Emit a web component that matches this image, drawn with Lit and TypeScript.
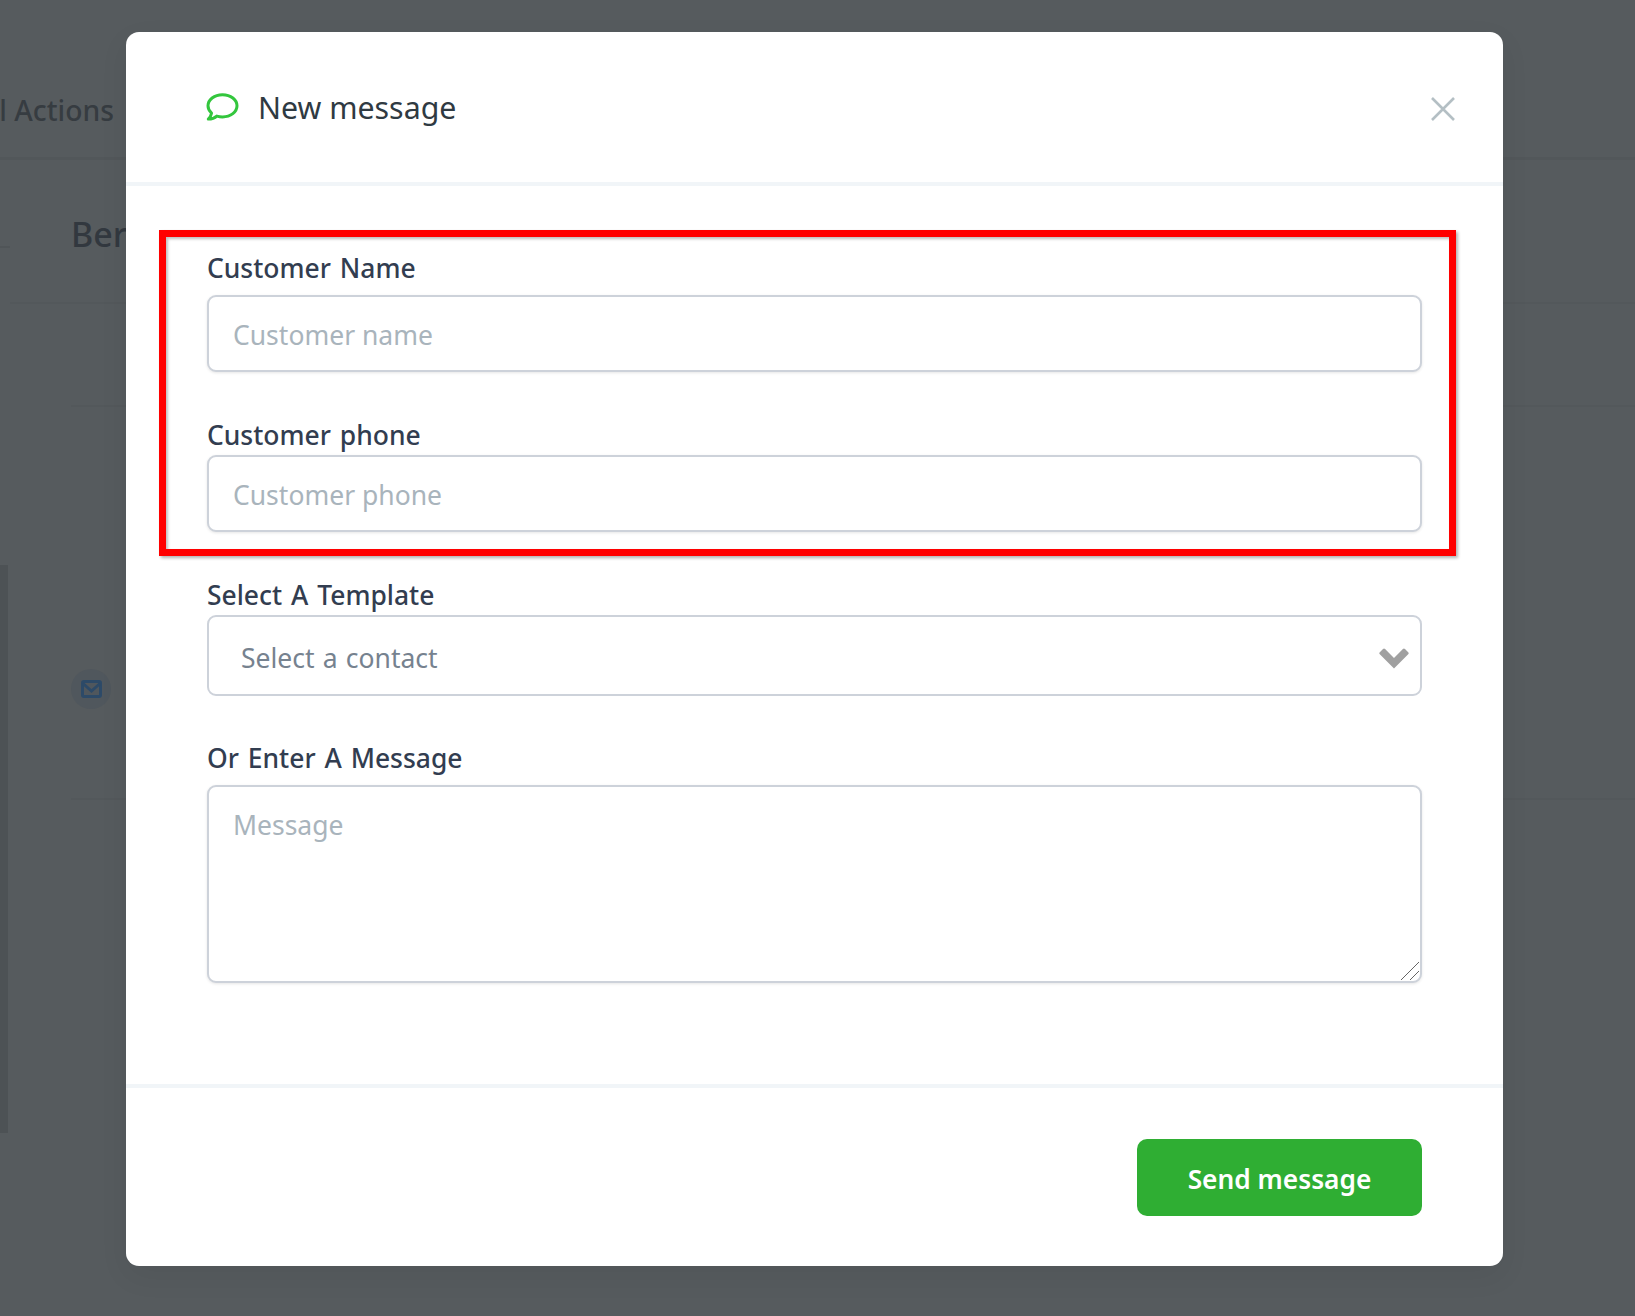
import { LitElement, html, css } from "lit";
import { customElement } from "lit/decorators.js";

@customElement("app-root")
export class AppRoot extends LitElement {
  static styles = css`
    :host { display: block; width: 1635px; height: 1316px; position: relative; overflow: hidden; background: #565b5e; font-family: "Noto Sans", "Open Sans", sans-serif; color: #2d3748; }
    * { box-sizing: border-box; }
    .page { height: 100%; display: flex; flex-direction: column; color: #32383f; }
    .nav { height: 160px; flex: none; border-bottom: 3px solid #52575a; display: flex; align-items: center; padding-top: 62px; }
    .tab { width: 114px; display: flex; justify-content: flex-end; overflow: hidden; white-space: nowrap; font-size: 28.3px; font-weight: 500; color: #363c41; }
    .top { height: 144px; flex: none; display: flex; align-items: flex-start; }
    .stub { width: 10px; height: 88px; flex: none; border-bottom: 2px solid #505558; }
    .title-row { flex: 1; height: 144px; border-bottom: 2px solid #53585b; padding: 49px 0 0 61px; font-size: 34px; font-weight: 500; line-height: 50px; }
    .rule { height: 103px; flex: none; margin-left: 71px; border-bottom: 2px solid #53585b; }
    .content { flex: 1; display: flex; min-height: 0; }
    .side { width: 8px; height: 568px; margin-top: 158px; background: #4d5255; flex: none; }
    .main { flex: 1; margin-left: 63px; height: 393px; border-bottom: 2px solid #53585b; }
    .mail { width: 40px; height: 40px; margin-top: 262px; border-radius: 50%; background: #50575d; display: flex; align-items: center; justify-content: center; }
    .mail svg { display: block; }

    .modal { position: absolute; left: 126px; top: 32px; width: 1377px; height: 1234px; background: #fff; border-radius: 13px; display: flex; flex-direction: column; box-shadow: 0 10px 30px rgba(0,0,0,.06); }
    .head { height: 154px; flex: none; border-bottom: 4px solid #f1f5f8; display: flex; align-items: center; padding: 3px 48px 0 80px; }
    .head svg.chat { margin: 0 19px 2px 0; display: block; }
    .head h2 { margin: 0 0 2px; flex: 1; font-size: 30.3px; font-weight: 400; line-height: 40px; color: #2f3a42; }
    .close { width: 24px; height: 24px; padding: 0; border: 0; background: none; display: block; }
    .body { flex: 1; padding: 68px 81px 0 81px; min-height: 0; }
    .field { display: flex; flex-direction: column; }
    .field + .field { margin-top: 49px; }
    .field.last { margin-top: 48px; }
    label { font-size: 26.45px; word-spacing: 2px; font-weight: 500; line-height: 28px; color: #323d50; margin-bottom: 6px; }
    .first label, .last label { margin-bottom: 13px; }
    input, textarea, select { font-family: inherit; font-size: 26.5px; border: 2px solid #cdd2da; border-radius: 9px; background: #fff; color: #2d3748; outline: none; width: 100%; display: block; box-shadow: 0 1px 3px rgba(0,0,0,.1); margin: 0; }
    input { height: 77px; padding: 2px 24px 0; }
    input::placeholder, textarea::placeholder { color: #a9b4bc; opacity: 1; }
    .area { position: relative; }
    textarea { height: 198px; padding: 20px 24px; line-height: 36px; resize: none; }
    .grip { position: absolute; right: 3px; bottom: 3px; display: block; pointer-events: none; }
    .sel { position: relative; }
    select { height: 81px; padding: 4px 32px 0; word-spacing: 1.300px; appearance: none; -webkit-appearance: none; color: #76828f; box-shadow: none; }
    .chev { position: absolute; right: 13px; top: 33px; display: block; pointer-events: none; }
    .foot { height: 182px; flex: none; border-top: 4px solid #f1f5f8; display: flex; justify-content: flex-end; padding: 51px 81px 0 0; }
    .send { width: 285px; height: 77px; border: 0; border-radius: 10px; background: #2fae33; color: #fff; font-family: inherit; font-size: 26.3px; font-weight: 600; padding: 2px 0 0; }

    .mark { position: absolute; left: 33px; top: 198px; width: 1297px; height: 326px; border: 7px solid #ff0000; box-shadow: 2px 2px 3px rgba(0,0,0,.3), inset 2px 2px 3px rgba(0,0,0,.25); pointer-events: none; }
  `;

  render() {
    return html`
      <div class="page">
        <div class="nav"><div class="tab">l Actions</div></div>
        <div class="top"><div class="stub"></div><div class="title-row">Ber</div></div>
        <div class="rule"></div>
        <div class="content">
          <div class="side"></div>
          <div class="main">
            <div class="mail">
              <svg width="21" height="18" viewBox="0 0 21 18" fill="none" stroke="#2d4a68" stroke-width="3"><rect x="1.5" y="1.5" width="18" height="15" rx="1.500"/><path d="M2 3.500l8.500 7.500L19 3.500"/></svg>
            </div>
          </div>
        </div>
      </div>

      <div class="modal">
        <div class="head">
          <svg class="chat" width="33" height="29" viewBox="0 0 33 29" fill="none"><path d="M16.500 1.700C8.200 1.700 2 6.700 2 12.800c0 2.900 1.300 5.400 3.600 7.300-.4 2.300-1.500 4.300-3.300 6 3.200 0 6.500-1.100 8.500-3 1.800.5 3.700.8 5.700.8 8.300 0 14.500-5 14.500-11.100S24.800 1.700 16.500 1.700z" stroke="#33c63d" stroke-width="3" stroke-linejoin="round"/></svg>
          <h2>New message</h2>
          <button class="close" aria-label="Close">
            <svg width="24" height="24" viewBox="0 0 24 24" fill="none" stroke="#b4bfc4" stroke-width="2.600"><path d="M1 1l22 22M23 1L1 23"/></svg>
          </button>
        </div>
        <div class="body">
          <div class="field first"><label>Customer Name</label><input placeholder="Customer name" /></div>
          <div class="field"><label>Customer phone</label><input placeholder="Customer phone" /></div>
          <div class="field"><label>Select A Template</label>
            <div class="sel">
              <select><option>Select a contact</option></select>
              <svg class="chev" width="30" height="21" viewBox="0 0 30 21" fill="#a0a0a0"><path d="M15 20.500L.8 6.300a1.500 1.500 0 0 1 0-2.100L4 1a1.500 1.500 0 0 1 2.100 0L15 9.900 23.900 1a1.500 1.500 0 0 1 2.100 0l3.200 3.200a1.500 1.500 0 0 1 0 2.100z"/></svg>
            </div>
          </div>
          <div class="field last"><label>Or Enter A Message</label>
            <div class="area">
              <textarea placeholder="Message"></textarea>
              <svg class="grip" width="18" height="18" viewBox="0 0 18 18" fill="none" stroke="#666" stroke-width="1"><path d="M0 18L18 0M9 18l9-9"/></svg>
            </div>
          </div>
        </div>
        <div class="foot"><button class="send">Send message</button></div>
        <div class="mark"></div>
      </div>
    `;
  }
}
